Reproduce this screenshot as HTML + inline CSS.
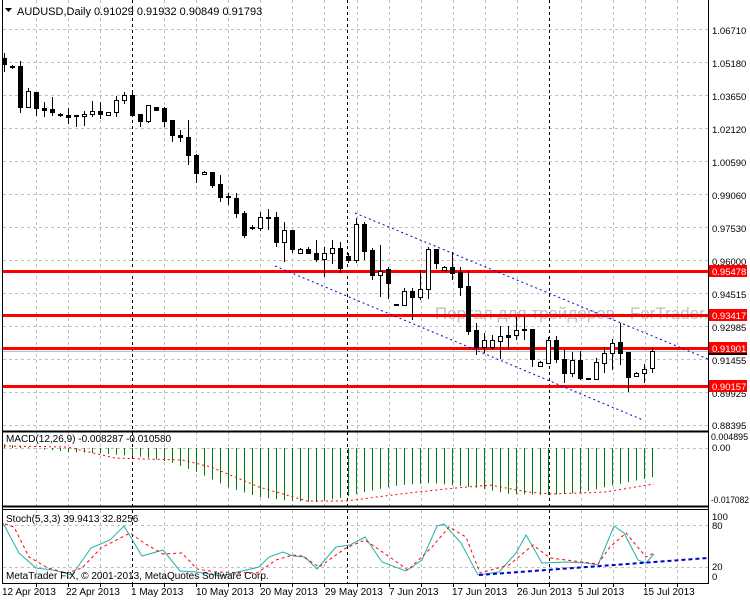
<!DOCTYPE html>
<html><head><meta charset="utf-8"><style>
html,body{margin:0;padding:0;background:#fff;}
svg{display:block;font-family:"Liberation Sans",sans-serif;font-size:10px;}
</style></head><body>
<svg id="c" width="750" height="600" xmlns="http://www.w3.org/2000/svg">
<rect width="750" height="600" fill="#fff"/>
<g id="grid"></g>
<text x="435" y="319" font-size="17" fill="#c0c0c0">Портал для трейдеров - ForTrader.ru</text>
<g id="lines"></g>
<g id="cand"></g>
<g id="over"></g>
<g stroke="#000" fill="none">
<line x1="2.5" y1="0" x2="2.5" y2="583"/>
<line x1="708.5" y1="0" x2="708.5" y2="583"/>
<line x1="2" y1="431.5" x2="709" y2="431.5" stroke-width="2"/>
<line x1="2" y1="506.5" x2="709" y2="506.5" stroke-width="2"/>
<line x1="2" y1="509.5" x2="709" y2="509.5"/>
<line x1="2" y1="583.5" x2="709" y2="583.5"/>
</g>
<path d="M5 8 L12 8 L8.5 12 Z" fill="#000"/>
<text x="17" y="15" font-size="11">AUDUSD,Daily  0.91029 0.91932 0.90849 0.91793</text>
<g font-size="9.5" fill="#000">
<text x="712" y="34">1.06710</text>
<text x="712" y="67">1.05180</text>
<text x="712" y="100">1.03650</text>
<text x="712" y="133">1.02120</text>
<text x="712" y="166">1.00590</text>
<text x="712" y="199">0.99060</text>
<text x="712" y="232">0.97530</text>
<text x="712" y="265">0.96000</text>
<text x="712" y="298">0.94515</text>
<text x="712" y="331">0.92985</text>
<text x="712" y="364">0.91455</text>
<text x="712" y="397">0.89925</text>
<text x="712" y="429">0.88395</text>
</g>
<g font-size="9.5">
<rect x="709" y="265" width="38" height="12" fill="#f00"/><text x="712" y="275" fill="#fff">0.95478</text>
<rect x="709" y="309" width="38" height="12" fill="#f00"/><text x="712" y="319" fill="#fff">0.93417</text>
<rect x="709" y="342" width="38" height="12" fill="#f00"/><text x="712" y="352" fill="#fff">0.91901</text>
<rect x="709" y="353" width="38" height="2" fill="#000"/>
<rect x="709" y="380" width="38" height="12" fill="#f00"/><text x="712" y="390" fill="#fff">0.90157</text>
<text x="711" y="440" textLength="37" lengthAdjust="spacingAndGlyphs">0.004895</text>
<text x="712" y="451">0.00</text>
<text x="711" y="503" textLength="38" lengthAdjust="spacingAndGlyphs">-0.017082</text>
<text x="712" y="520">100</text>
<text x="712" y="529">80</text>
<text x="712" y="570">20</text>
<text x="712" y="580">0</text>
</g>
<text x="6" y="442">MACD(12,26,9) -0.008287 -0.010580</text>
<text x="6" y="522">Stoch(5,3,3) 39.9413 32.8256</text>
<text x="6" y="579">MetaTrader FIX, © 2001-2013, MetaQuotes Software Corp.</text>
<g font-size="10">
<text x="2" y="595">12 Apr 2013</text>
<text x="66" y="595">22 Apr 2013</text>
<text x="131" y="595">1 May 2013</text>
<text x="196" y="595">10 May 2013</text>
<text x="260" y="595">20 May 2013</text>
<text x="325" y="595">29 May 2013</text>
<text x="389" y="595">7 Jun 2013</text>
<text x="452" y="595">17 Jun 2013</text>
<text x="517" y="595">26 Jun 2013</text>
<text x="578" y="595">5 Jul 2013</text>
<text x="643" y="595">15 Jul 2013</text>
</g>
</svg>
<script>
var NS="http://www.w3.org/2000/svg";
function el(p,t,a){var e=document.createElementNS(NS,t);for(var k in a)e.setAttribute(k,a[k]);document.getElementById(p).appendChild(e);return e;}
var hy=[29,62,95,128,161,194,227,260,293,326,359,392,425];
hy.forEach(function(y){el("grid","line",{x1:3,x2:708,y1:y+.5,y2:y+.5,stroke:"#c0c0c0","stroke-dasharray":"3,3"});});
for(var x=36;x<708;x+=32.05){var xx=Math.round(x)+.5;
 [[0,431],[432,506],[510,583]].forEach(function(r){el("grid","line",{x1:xx,x2:xx,y1:r[0],y2:r[1],stroke:"#c0c0c0","stroke-dasharray":"3,3"});});
 el("grid","line",{x1:xx,x2:xx,y1:584,y2:587,stroke:"#000"});}
[448,525,567].forEach(function(y){el("grid","line",{x1:3,x2:708,y1:y+.5,y2:y+.5,stroke:"#c0c0c0","stroke-dasharray":"3,3"});});
[132,347,549].forEach(function(x){el("grid","line",{x1:x+.5,x2:x+.5,y1:0,y2:583,stroke:"#000","stroke-dasharray":"3,3"});});
[271,315,348,386].forEach(function(y){el("lines","rect",{x:3,y:y-1,width:705,height:3,fill:"#f00"});});
el("lines","line",{x1:3,x2:708,y1:351.5,y2:351.5,stroke:"#c0c0c0"});
el("lines","line",{x1:355,y1:213,x2:708,y2:359,stroke:"#00c","stroke-dasharray":"2,3"});
el("lines","line",{x1:275,y1:266,x2:643,y2:420,stroke:"#00c","stroke-dasharray":"2,3"});
var C=[[53,72,58,64],[65,69,67,67],[61,113,66,107],[88,108,107,91],[92,116,92,108],[102,117,108,110],[97,116,109,112],[113,117,115,115],[108,124,115,117],[116,127,116,116],[111,126,116,114],[101,117,114,111],[102,119,111,114],[112,115,115,112],[96,117,112,100],[92,104,100,95],[92,115,95,115],[114,127,114,121],[105,123,121,105],[107,110,107,110],[107,127,108,121],[120,142,120,135],[130,142,135,137],[120,165,137,155],[154,183,155,173],[171,175,174,172],[174,188,172,185],[175,202,184,197],[193,205,197,197],[193,218,198,213],[211,238,213,235],[225,230,228,228],[212,231,228,217],[209,230,217,218],[212,247,217,242],[222,262,242,230],[230,253,230,249],[248,254,253,249],[247,254,249,253],[240,262,253,259],[247,277,259,253],[240,264,253,248],[242,273,248,268],[253,263,256,260],[218,263,260,224],[222,260,224,251],[248,280,250,275],[245,297,275,271],[267,299,269,283],[304,306,305,305],[288,306,305,291],[288,320,291,297],[270,300,297,289],[247,299,289,249],[249,269,249,263],[266,270,270,267],[252,280,267,273],[267,296,272,287],[271,335,286,331],[323,355,330,347],[333,353,347,340],[335,350,347,340],[326,359,341,336],[326,349,335,337],[317,340,335,330],[317,340,329,330],[329,367,329,359],[361,367,366,362],[337,364,363,340],[336,363,340,359],[349,383,359,373],[352,377,373,360],[351,380,360,378],[378,380,379,379],[358,380,379,362],[347,373,363,353],[339,370,353,343],[323,365,342,353],[352,392,352,377],[372,377,376,373],[364,383,373,369],[348,373,368,351]];
C.forEach(function(c,i){var x=4+8*i;
 var t=Math.min(c[2],c[3]),b=Math.max(c[2],c[3]);
 el("cand","line",{x1:x+.5,x2:x+.5,y1:c[0],y2:c[1],stroke:"#000"});
 if(b-t<1){el("cand","rect",{x:x-2,y:t-1,width:5,height:2,fill:"#000"});}
 else if(c[3]<c[2]){el("cand","rect",{x:x-2+.5,y:t+.5,width:4,height:b-t,fill:"#fff",stroke:"#000"});}
 else el("cand","rect",{x:x-2,y:t,width:5,height:b-t+1,fill:"#000"});
});
function interp(pts,x){if(x<=pts[0][0])return pts[0][1];for(var i=1;i<pts.length;i++){if(x<=pts[i][0]){var a=pts[i-1],b=pts[i];return a[1]+(b[1]-a[1])*(x-a[0])/(b[0]-a[0]);}}return pts[pts.length-1][1];}
var H=[[4,444],[20,446],[40,449],[70,452],[96,453],[144,457],[170,462],[197,472],[230,488],[259,497],[290,501],[317,502],[340,498],[365,492],[400,485],[432,483],[460,486],[480,488],[509,494],[547,495],[581,493],[614,485],[654,477]];
C.forEach(function(c,i){var x=4+8*i+.5;el("over","line",{x1:x,x2:x,y1:448,y2:interp(H,x),stroke:"#008000"});});
var S=[[4,446],[67,447],[115,458],[144,459],[182,460],[211,467],[259,487],[307,501],[346,501],[408,493],[456,488],[490,485],[528,492],[552,494],[605,492],[654,484]];
function pl(a){return a.map(function(p){return p.join(",")}).join(" ");}
el("over","polyline",{points:pl(S),fill:"none",stroke:"#f00","stroke-dasharray":"2,3"});
var K=[[3,523],[19,553],[36,568],[53,570],[72,575],[91,548],[110,540],[124,526],[142,556],[163,550],[180,571],[197,572],[221,576],[259,567],[269,557],[283,552],[293,556],[305,557],[317,569],[336,547],[350,545],[365,537],[382,562],[406,571],[422,560],[437,526],[444,524],[461,543],[478,575],[499,572],[516,553],[526,535],[542,563],[566,562],[586,563],[598,565],[614,526],[624,533],[638,560],[646,563],[654,554]];
var D=[[5,524],[14,527],[29,557],[48,568],[67,573],[82,568],[101,548],[130,533],[144,543],[163,554],[182,553],[197,569],[216,572],[257,573],[276,560],[293,555],[302,556],[319,567],[346,548],[365,540],[384,553],[408,570],[432,547],[449,527],[466,537],[480,573],[509,565],[533,545],[550,558],[598,564],[610,547],[626,533],[646,557],[654,553]];
el("over","polyline",{points:pl(K),fill:"none",stroke:"#20b2aa"});
el("over","polyline",{points:pl(D),fill:"none",stroke:"#f00","stroke-dasharray":"3,3"});
el("over","line",{x1:479,y1:575,x2:708,y2:558,stroke:"#00c","stroke-width":2,"stroke-dasharray":"4,3"});
</script>
</body></html>
